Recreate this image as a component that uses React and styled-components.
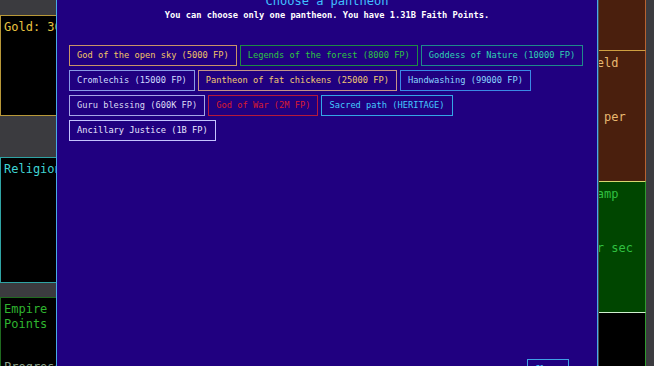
import styled, { createGlobalStyle } from 'styled-components'

const GlobalStyle = createGlobalStyle`
  html, body {
    margin: 0;
    padding: 0;
    background: #3b3b3f;
    overflow: hidden;
  }
  body {
    font-family: 'DejaVu Sans Mono', 'Liberation Mono', monospace;
  }
`

const Page = styled.div`
  position: relative;
  width: 654px;
  height: 366px;
  overflow: hidden;
  display: flex;
  justify-content: space-between;
  padding-right: 8px;
  box-sizing: border-box;
`

const LeftColumn = styled.div`
  width: 90px;
  padding-top: 15px;
  display: flex;
  flex-direction: column;
`

const SidePanel = styled.div`
  box-sizing: border-box;
  height: ${({ $height }) => $height}px;
  margin-bottom: ${({ $gap }) => $gap || 0}px;
  flex-shrink: 0;
  background: #000;
  border: 1px solid ${({ $border }) => $border};
  color: ${({ $color }) => $color};
  padding: 4px 3px;
  font-size: 12px;
  line-height: 15px;
`

const PanelLine = styled.div`
  white-space: nowrap;
  margin-top: ${({ $top }) => $top || 0}px;
  color: ${({ $color }) => $color || 'inherit'};
`

const RightColumn = styled.div`
  width: 111px;
  display: flex;
  flex-direction: column;
`

const StatPanel = styled.div`
  box-sizing: border-box;
  height: ${({ $height }) => ($height ? `${$height}px` : 'auto')};
  flex: ${({ $height }) => ($height ? '0 0 auto' : '1')};
  background: ${({ $bg }) => $bg};
  border-top: ${({ $top }) => ($top ? `1px solid ${$top}` : 'none')};
  border-right: 1px solid ${({ $side }) => $side};
  color: ${({ $color }) => $color};
  padding: 5px 4px 0;
  font-size: 12px;
  line-height: 15px;
  display: flex;
  flex-direction: column;
  gap: 24px;
`

const Stat = styled.div`
  white-space: nowrap;
`

const Modal = styled.div`
  position: absolute;
  left: 56px;
  top: -7px;
  width: 542px;
  height: 400px;
  box-sizing: border-box;
  background: #200080;
  border: 1px solid #48ace6;
  box-shadow: 1px 0 0 #4a4a55;
  padding: 0 12px 12px;
  display: flex;
  flex-direction: column;
`

const Title = styled.div`
  text-align: center;
  color: #40c0ff;
  font-size: 12px;
  line-height: 14px;
`

const Subtitle = styled.div`
  text-align: center;
  color: #ffffff;
  font-size: 8.7px;
  font-weight: bold;
  line-height: 12px;
  margin-top: 1px;
`

const ChoiceList = styled.div`
  margin-top: 24px;
  display: flex;
  flex-wrap: wrap;
  gap: 4px 3px;
`

const Choice = styled.button`
  height: 21px;
  box-sizing: border-box;
  margin: 0;
  padding: 0 7px;
  background: transparent;
  border: 1px solid ${({ $border }) => $border};
  color: ${({ $color }) => $color};
  font-family: 'DejaVu Sans Mono', 'Liberation Mono', monospace;
  font-size: 8.7px;
  line-height: 19px;
  white-space: nowrap;
  cursor: pointer;
`

const Footer = styled.div`
  margin-top: auto;
  display: flex;
  justify-content: flex-end;
  padding-right: 16px;
`

const pantheons = [
  { label: 'God of the open sky (5000 FP)', border: '#c89468', color: '#f2c466' },
  { label: 'Legends of the forest (8000 FP)', border: '#1f8a44', color: '#2ec443' },
  { label: 'Goddess of Nature (10000 FP)', border: '#1f8a8a', color: '#2fd0b4' },
  { label: 'Cromlechis (15000 FP)', border: '#8a9ae6', color: '#cfdcff' },
  { label: 'Pantheon of fat chickens (25000 FP)', border: '#c49488', color: '#f2c872' },
  { label: 'Handwashing (99000 FP)', border: '#3a8ae6', color: '#8ad6ff' },
  { label: 'Guru blessing (600K FP)', border: '#a6a6e6', color: '#dcdcf4' },
  { label: 'God of War (2M FP)', border: '#b41a3c', color: '#d81c30' },
  { label: 'Sacred path (HERITAGE)', border: '#34a6e6', color: '#44caff' },
  { label: 'Ancillary Justice (1B FP)', border: '#c4c4ff', color: '#e6e6ff' },
]

function App() {
  return (
    <>
      <GlobalStyle />
      <Page>
        <LeftColumn>
          <SidePanel $height={101} $gap={41} $border="#b89838" $color="#e8c440">
            <PanelLine>Gold: 30.5M</PanelLine>
          </SidePanel>
          <SidePanel $height={126} $gap={14} $border="#2fa4a4" $color="#3fd4d4">
            <PanelLine>Religion</PanelLine>
          </SidePanel>
          <SidePanel $height={90} $border="#1f6a1f" $color="#2fb42f">
            <PanelLine>Empire</PanelLine>
            <PanelLine>Points</PanelLine>
            <PanelLine $top={28} $color="#8aa08a">Progress:</PanelLine>
          </SidePanel>
        </LeftColumn>

        <RightColumn>
          <StatPanel $height={50} $bg="#4a1f0d" $side="#b86230" $color="#e8b870" />
          <StatPanel $height={131} $bg="#4a1f0d" $top="#d0a040" $side="#b86230" $color="#e8b870">
            <Stat>
              Faith yield
              <br />
              +4.2M
            </Stat>
            <Stat>
              Devotees per
              <br />
              second
            </Stat>
          </StatPanel>
          <StatPanel $height={131} $bg="#004600" $top="#d8d870" $side="#2f9a2f" $color="#30c040">
            <Stat>
              Grand champ
              <br />
              x12
            </Stat>
            <Stat>
              Faith per sec
              <br />
              +900
            </Stat>
          </StatPanel>
          <StatPanel $bg="#000" $top="#d0f0d0" $side="#2f9a2f" $color="#30c040" />
        </RightColumn>

        <Modal>
          <Title>Choose a pantheon</Title>
          <Subtitle>You can choose only one pantheon. You have 1.31B Faith Points.</Subtitle>
          <ChoiceList>
            {pantheons.map((p) => (
              <Choice key={p.label} $border={p.border} $color={p.color}>
                {p.label}
              </Choice>
            ))}
          </ChoiceList>
          <Footer>
            <Choice $border="#40a0e6" $color="#44caff">
              Close
            </Choice>
          </Footer>
        </Modal>
      </Page>
    </>
  )
}

export default App
